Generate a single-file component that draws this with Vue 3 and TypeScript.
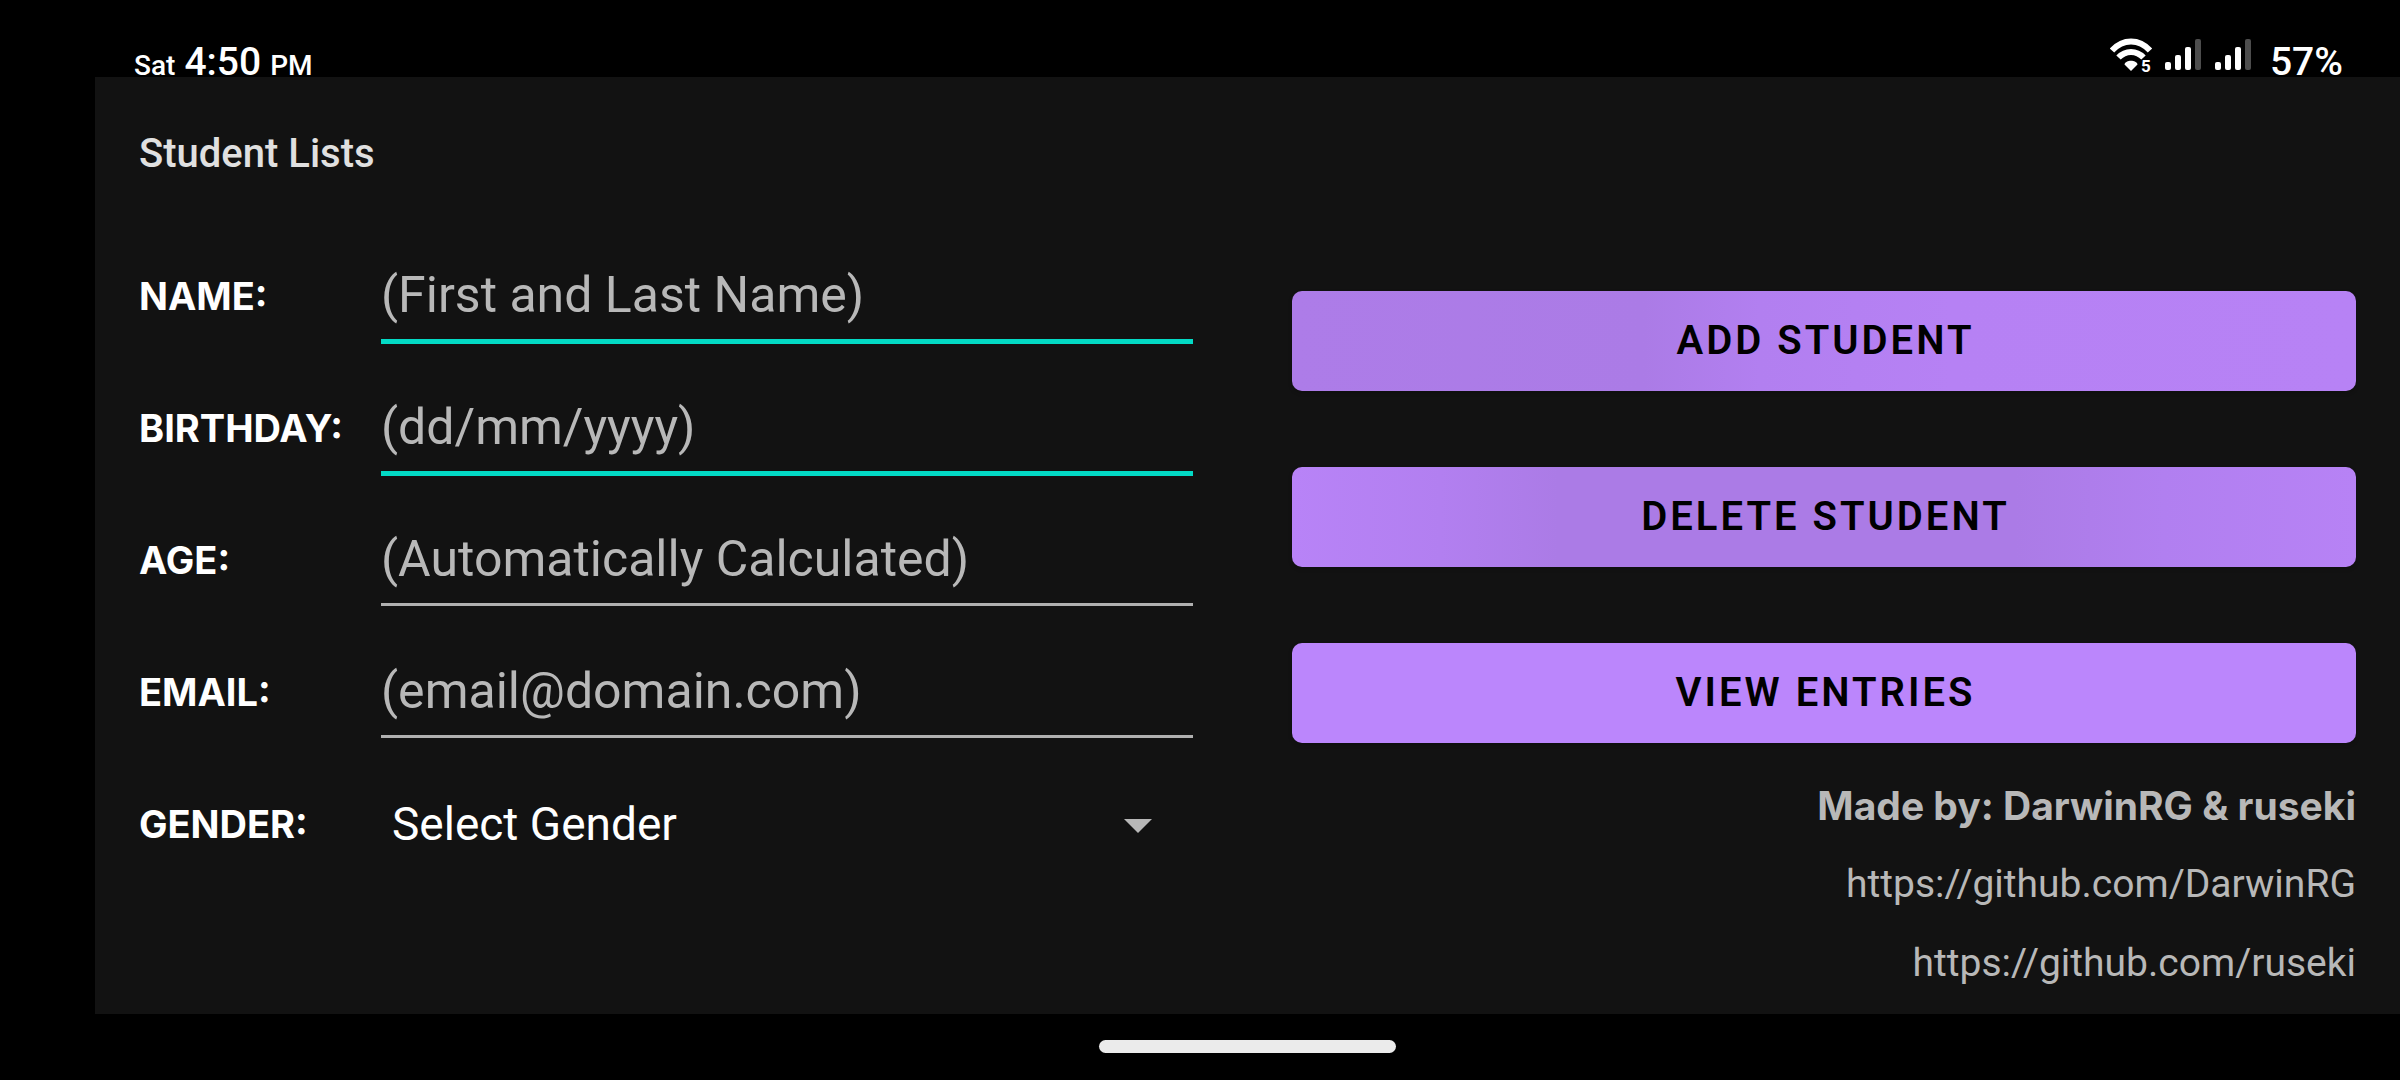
<script setup lang="ts">
import { reactive } from 'vue'

interface Field {
  id: 'name' | 'birthday' | 'age' | 'email'
  label: string
  hint: string
  type: string
  active: boolean
}

const fields: Field[] = [
  { id: 'name', label: 'NAME:', hint: '(First and Last Name)', type: 'text', active: true },
  { id: 'birthday', label: 'BIRTHDAY:', hint: '(dd/mm/yyyy)', type: 'text', active: true },
  { id: 'age', label: 'AGE:', hint: '(Automatically Calculated)', type: 'text', active: false },
  { id: 'email', label: 'EMAIL:', hint: '(email@domain.com)', type: 'email', active: false },
]

const student = reactive({ name: '', birthday: '', age: '', email: '', gender: '' })

const links: string[] = ['https://github.com/DarwinRG', 'https://github.com/ruseki']
</script>

<template>
  <div class="screen">
    <header class="status">
      <div class="clock">
        <span class="small">Sat</span>
        <span class="time">4:50</span>
        <span class="small">PM</span>
      </div>
      <div class="indicators">
        <svg class="wifi" viewBox="0 0 48 40" width="48" height="40" aria-hidden="true">
          <g fill="none" stroke="#fff" stroke-width="6">
            <path d="M2 12.500C13 0.500 29 0.500 40 12.500" />
            <path d="M8.500 19.500C15.500 12 26.500 12 33.500 19.500" />
          </g>
          <path d="M21 33L14.500 26.500C15.500 21.500 26.500 21.500 27.500 26.500Z" fill="#fff" />
          <text x="31" y="34" class="band">5</text>
        </svg>
        <svg v-for="n in 2" :key="n" class="signal" viewBox="0 0 36 32" width="36" height="32" aria-hidden="true">
          <rect x="0" y="23" width="6" height="8" rx="2" fill="#fff" />
          <rect x="10" y="16" width="6" height="15" rx="2" fill="#fff" />
          <rect x="20" y="8" width="6" height="23" rx="2" fill="#fff" />
          <rect x="30" y="0" width="6" height="31" rx="2" fill="#4d4d4d" />
        </svg>
        <span class="time">57%</span>
      </div>
    </header>

    <main class="panel">
      <h1>Student Lists</h1>
      <div class="columns">
        <form class="fields" @submit.prevent>
          <div v-for="f in fields" :key="f.id" class="row">
            <label :for="f.id">{{ f.label }}</label>
            <input
              :id="f.id"
              v-model="student[f.id]"
              :type="f.type"
              :placeholder="f.hint"
              :class="{ active: f.active }"
            />
          </div>
          <div class="row">
            <label for="gender">GENDER:</label>
            <div class="picker">
              <select id="gender" v-model="student.gender">
                <option value="">Select Gender</option>
                <option value="male">Male</option>
                <option value="female">Female</option>
              </select>
              <svg class="arrow" viewBox="0 0 28 14" width="28" height="14" aria-hidden="true">
                <path d="M0 0H28L14 14Z" fill="#b8b8b8" />
              </svg>
            </div>
          </div>
        </form>

        <section class="actions">
          <button type="button" class="add">ADD STUDENT</button>
          <button type="button" class="delete">DELETE STUDENT</button>
          <button type="button">VIEW ENTRIES</button>
          <div class="credits">
            <strong>Made by: DarwinRG &amp; ruseki</strong>
            <a v-for="link in links" :key="link" :href="link">{{ link }}</a>
          </div>
        </section>
      </div>
    </main>

    <footer class="nav"><span class="pill"></span></footer>
  </div>
</template>

<style>
body {
  margin: 0;
  background: #000;
}
</style>

<style scoped>
.screen {
  display: flex;
  flex-direction: column;
  box-sizing: border-box;
  min-height: 100vh;
  padding-left: 95px;
  background: #000;
  color: #fff;
  font-family: Roboto, "Liberation Sans", sans-serif;
}

.status {
  display: flex;
  justify-content: space-between;
  box-sizing: border-box;
  height: 77px;
  padding: 38px 57px 0 39px;
  font-weight: 500;
  line-height: 48px;
}

.clock {
  display: flex;
  align-items: baseline;
  gap: 9px;
}

.time {
  font-size: 39px;
}

.small {
  font-size: 28px;
}

.indicators {
  display: flex;
  align-items: flex-start;
}

.wifi {
  margin-right: 7px;
}

.signal {
  margin: 1px 14px 0 0;
}

.indicators .time {
  margin-left: 5px;
}

.band {
  fill: #fff;
  font-size: 17px;
  font-weight: 700;
}

.panel {
  flex: 1;
  padding: 0 44px;
  background: #121212;
}

h1 {
  margin: 0;
  padding-top: 2px;
  color: #e0e0e0;
  font-size: 40px;
  font-weight: 500;
  line-height: 150px;
}

.columns {
  display: grid;
  grid-template-columns: 1fr 1fr;
  gap: 89px;
}

.fields {
  padding-right: 10px;
}

.row {
  display: grid;
  grid-template-columns: 242px 1fr;
  align-items: start;
  box-sizing: border-box;
  height: 132px;
  padding-top: 22px;
}

label {
  font-family: Inter, "Liberation Sans", sans-serif;
  font-size: 38px;
  font-weight: 700;
  line-height: 90px;
}

input {
  width: 100%;
  height: 88px;
  box-sizing: content-box;
  padding: 0;
  border: 0;
  border-bottom: 3px solid #b0b0b0;
  border-radius: 0;
  outline: 0;
  background: none;
  color: #fff;
  font-family: inherit;
  font-size: 50px;
}

input.active {
  border-bottom: 5px solid #03dac5;
}

input::placeholder {
  color: #b8b8b8;
  opacity: 1;
}

.picker {
  position: relative;
}

select {
  width: 100%;
  height: 90px;
  padding: 0 60px 0 11px;
  border: 0;
  outline: 0;
  appearance: none;
  background: #121212;
  color: #fff;
  font-family: inherit;
  font-size: 46px;
}

.arrow {
  position: absolute;
  top: 40px;
  right: 41px;
  pointer-events: none;
}

.actions {
  display: flex;
  flex-direction: column;
  gap: 76px;
  padding-top: 62px;
}

button {
  height: 100px;
  padding: 0 0 2px 3px;
  border: 0;
  border-radius: 10px;
  background: #bb86fc;
  box-shadow: 0 2px 4px rgba(0, 0, 0, 0.2);
  color: #000;
  font-family: inherit;
  font-size: 40px;
  font-weight: 600;
  letter-spacing: 3px;
}

.add {
  background: linear-gradient(90deg, #ad7ce8 0%, #ab7be6 33%, #b27ff0 44%, #b681f4 62%, #b782f5 100%);
}

.delete {
  background: linear-gradient(90deg, #b883f7 0%, #b27ff0 14%, #ab7be6 25%, #ab7be6 68%, #b17ff0 82%, #b782f5 100%);
}

.credits {
  display: flex;
  flex-direction: column;
  align-items: flex-end;
  margin-top: -53px;
  color: #b8b8b8;
  font-size: 39px;
  line-height: 79px;
}

.credits strong {
  font-family: Inter, "Liberation Sans", sans-serif;
  font-weight: 700;
}

.credits a {
  color: inherit;
  text-decoration: none;
}

.nav {
  display: flex;
  justify-content: center;
  box-sizing: border-box;
  height: 66px;
  padding-top: 26px;
}

.pill {
  width: 297px;
  height: 13px;
  border-radius: 7px;
  background: #ebebeb;
}
</style>
